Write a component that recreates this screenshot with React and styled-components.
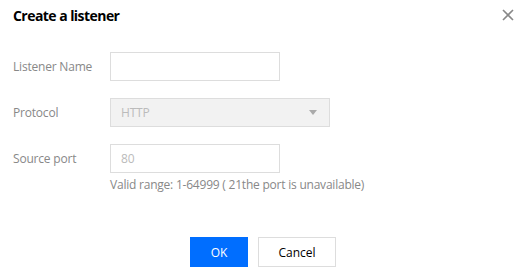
import styled, { createGlobalStyle } from "styled-components";

const Global = createGlobalStyle`
  body {
    margin: 0;
    background: #fff;
    font-family: "Open Sans", "Noto Sans", sans-serif;
  }
`;

const Dialog = styled.div`
  width: 523px;
  height: 275px;
  box-sizing: border-box;
  padding: 6px 13px 0 13px;
  display: flex;
  flex-direction: column;
`;

const Header = styled.div`
  display: flex;
  justify-content: space-between;
  align-items: center;
  height: 18px;
`;

const Title = styled.h1`
  margin: 0;
  font-size: 14px;
  font-weight: 700;
  letter-spacing: -0.55px;
  color: #000;
`;

const Close = styled.button`
  border: 0;
  background: none;
  padding: 0;
  width: 12px;
  height: 12px;
  margin-right: -4px;
  cursor: pointer;
  display: flex;
`;

const Form = styled.div`
  margin-top: 28px;
  display: flex;
  flex-direction: column;
  gap: 17px;
`;

const Row = styled.div`
  display: grid;
  grid-template-columns: 97px auto;
  align-items: start;
`;

const Label = styled.label`
  font-size: 12px;
  letter-spacing: -0.2px;
  color: #888;
  line-height: 29px;
`;

const Field = styled.div`
  display: flex;
  flex-direction: column;
`;

const Input = styled.div`
  box-sizing: border-box;
  width: ${(p) => p.$w}px;
  height: 29px;
  border: 1px solid #ddd;
  background: ${(p) => (p.$disabled ? "#f2f2f2" : "#fff")};
  padding: 0 10px;
  display: flex;
  align-items: center;
  justify-content: space-between;
  font-size: 12px;
  letter-spacing: -0.2px;
  color: #bbb;
`;

const Caret = styled.span`
  width: 0;
  height: 0;
  border-left: 4px solid transparent;
  border-right: 4px solid transparent;
  border-top: 5px solid #aaa;
  margin-right: 2px;
`;

const Hint = styled.div`
  font-size: 12px;
  letter-spacing: -0.22px;
  color: #888;
  margin-top: 3px;
`;

const Footer = styled.div`
  margin-top: auto;
  margin-bottom: 8px;
  display: flex;
  justify-content: center;
  gap: 10px;
  padding-left: 3px;
`;

const Button = styled.button`
  box-sizing: border-box;
  height: 30px;
  min-width: ${(p) => (p.$primary ? 58 : 78)}px;
  border: 1px solid ${(p) => (p.$primary ? "#006eff" : "#ddd")};
  background: ${(p) => (p.$primary ? "#006eff" : "#fff")};
  color: ${(p) => (p.$primary ? "#fff" : "#000")};
  font-family: inherit;
  font-size: 12px;
  padding: 0 12px;
  cursor: pointer;
`;

export default function App() {
  return (
    <Dialog>
      <Global />
      <Header>
        <Title>Create a listener</Title>
        <Close aria-label="close">
          <svg width="12" height="12" viewBox="0 0 12 12">
            <path d="M1 1L11 11M11 1L1 11" stroke="#888" strokeWidth="1.6" />
          </svg>
        </Close>
      </Header>
      <Form>
        <Row>
          <Label>Listener Name</Label>
          <Input $w={170} />
        </Row>
        <Row>
          <Label>Protocol</Label>
          <Input $w={220} $disabled>
            HTTP
            <Caret />
          </Input>
        </Row>
        <Row>
          <Label>Source port</Label>
          <Field>
            <Input $w={170}>80</Input>
            <Hint>Valid range: 1-64999 ( 21the port is unavailable)</Hint>
          </Field>
        </Row>
      </Form>
      <Footer>
        <Button $primary>OK</Button>
        <Button>Cancel</Button>
      </Footer>
    </Dialog>
  );
}
